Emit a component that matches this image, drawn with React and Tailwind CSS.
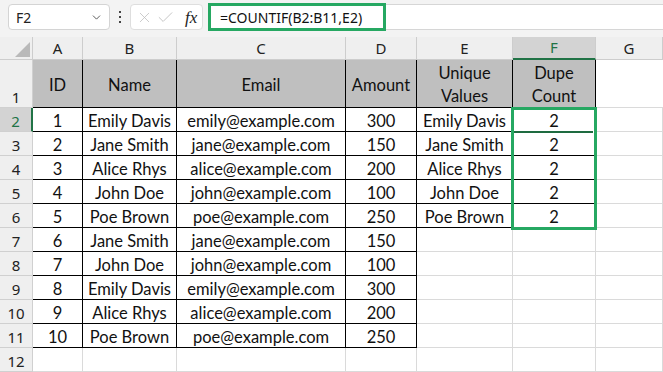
import React from "react";
import { ChevronDown, X, Check } from "lucide-react";

const COLS = ["A", "B", "C", "D", "E", "F", "G"];
const data = [
  ["1", "Emily Davis", "emily@example.com", "300", "Emily Davis", "2"],
  ["2", "Jane Smith", "jane@example.com", "150", "Jane Smith", "2"],
  ["3", "Alice Rhys", "alice@example.com", "200", "Alice Rhys", "2"],
  ["4", "John Doe", "john@example.com", "100", "John Doe", "2"],
  ["5", "Poe Brown", "poe@example.com", "250", "Poe Brown", "2"],
  ["6", "Jane Smith", "jane@example.com", "150", "", ""],
  ["7", "John Doe", "john@example.com", "100", "", ""],
  ["8", "Emily Davis", "emily@example.com", "300", "", ""],
  ["9", "Alice Rhys", "alice@example.com", "200", "", ""],
  ["10", "Poe Brown", "poe@example.com", "250", "", ""],
  ["", "", "", "", "", ""],
];

function isBlack(col, row) {
  if (col <= 3 && row <= 11) return true;
  if ((col === 4 || col === 5) && row <= 6) return true;
  return false;
}

export default function App() {
  const headerCells = ["ID", "Name", "Email", "Amount", "Unique\nValues", "Dupe\nCount"];
  return (
    <div className="w-[663px] h-[372px] overflow-hidden bg-white" style={{ fontFamily: "Lato, 'Noto Sans', sans-serif" }}>
      {/* formula bar */}
      <div className="h-[37px] bg-[#f3f3f3] flex items-start pt-[4px]">
        <div className="ml-[8px] w-[102px] h-[26px] bg-white border border-[#d4d4d4] rounded-[4px] flex items-center justify-between pl-[7px] pr-[6px] text-[14px] text-[#222]" style={{ fontFamily: "'Noto Sans', sans-serif" }}>
          <span>F2</span>
          <ChevronDown size={13} strokeWidth={1.6} color="#444" />
        </div>
        <div className="w-[20px] h-[26px] flex flex-col items-center justify-center gap-[3px]">
          <div className="w-[2px] h-[2px] bg-[#444]" />
          <div className="w-[2px] h-[2px] bg-[#444]" />
          <div className="w-[2px] h-[2px] bg-[#444]" />
        </div>
        <div className="w-[73px] h-[26px] bg-white border border-[#dedede] rounded-[4px] flex items-center pl-[5px] gap-[3px]">
          <X size={17} strokeWidth={1.1} color="#bdbdbd" />
          <Check size={19} strokeWidth={1.1} color="#bdbdbd" />
          <span className="ml-[7px] text-[17px] italic text-[#222] leading-none" style={{ fontFamily: "'Liberation Serif', serif" }}>fx</span>
        </div>
        <div className="ml-[5px] flex-1 h-[26px] bg-white border-y border-[#d6d6d6] flex">
          <div className="w-[178px] h-[28px] -mt-[2px] border-[3px] border-[#26a862] flex items-center pl-[9px] text-[14px] text-[#111]" style={{ fontFamily: "'Noto Sans', sans-serif" }}>
            =COUNTIF(B2:B11,E2)
          </div>
        </div>
      </div>

      {/* grid */}
      <div className="relative">
        <div className="grid grid-cols-[33px_50px_94px_169px_71px_96px_83px_1fr] grid-rows-[23px_48px_repeat(11,24px)]">
          {/* corner */}
          <div className="bg-[#efefef] border-r border-b border-[#cdcdcd] relative">
            <svg className="absolute left-0 top-0" width="33" height="23" viewBox="0 0 33 23">
              <polygon points="30,5 30,20 15,20" fill="#b9b9b9" />
            </svg>
          </div>
          {COLS.map((c, i) => (
            <div
              key={c}
              className={
                i === 5
                  ? "bg-[#d3d3d3] border-r border-[#cdcdcd] border-b-2 border-b-[#217346] flex items-center justify-center text-[15px] text-[#217346]"
                  : "bg-[#efefef] border-r border-b border-[#cdcdcd] flex items-center justify-center text-[15px] text-[#222]"
              }
              style={{ fontFamily: "'Noto Sans', sans-serif" }}
            >
              {c}
            </div>
          ))}

          {/* row 1 */}
          <div className="bg-[#efefef] border-r border-b border-[#d0d0d0] flex items-end justify-center text-[15px] text-[#222]" style={{ fontFamily: "'Noto Sans', sans-serif" }}>
            <span className="leading-[20px]">1</span>
          </div>
          {headerCells.map((h, i) => (
            <div key={i} className="bg-[#bfbfbf] border-r border-b border-black flex items-center justify-center text-center whitespace-pre-line text-[16.5px] leading-[23px] pt-[3px] text-[#111]">
              {h}
            </div>
          ))}
          <div className="border-b border-[#dadada]" />

          {data.map((r, ri) => {
            const row = ri + 2;
            const active = row === 2;
            return (
              <React.Fragment key={row}>
                <div
                  className={
                    active
                      ? "bg-[#d3d3d3] border-r-2 border-r-[#217346] border-b border-b-[#d0d0d0] flex items-end justify-center text-[15px] text-[#217346]"
                      : "bg-[#efefef] border-r border-b border-[#d0d0d0] flex items-end justify-center text-[15px] text-[#222]"
                  }
                  style={{ fontFamily: "'Noto Sans', sans-serif" }}
                >
                  <span className="leading-[20px]">{row}</span>
                </div>
                {[0, 1, 2, 3, 4, 5, 6].map((ci) => {
                  const black = isBlack(ci, row);
                  const txt = ci < 6 ? r[ci] : "";
                  return (
                    <div
                      key={ci}
                      className={
                        (black ? "border-r border-b border-black" : "border-r border-b border-[#dadada]") +
                        " relative flex items-end justify-center text-[16.5px] text-[#111] whitespace-nowrap"
                      }
                    >
                      <span className="leading-[19px]">{txt}</span>
                      {ci === 5 && active && (
                        <>
                          <div className="absolute left-0 right-[2px] bottom-[-2px] h-[2px] bg-[#1e6b40]" />
                          <div className="absolute right-[-3px] bottom-[-3px] w-[5px] h-[5px] bg-[#1e6b40] border border-white" />
                        </>
                      )}
                    </div>
                  );
                })}
              </React.Fragment>
            );
          })}
        </div>
        {/* annotation box around F2:F6 */}
        <div className="absolute left-[511px] top-[70px] w-[86px] h-[123px] border-[3px] border-[#26a862] pointer-events-none" />
      </div>
    </div>
  );
}
